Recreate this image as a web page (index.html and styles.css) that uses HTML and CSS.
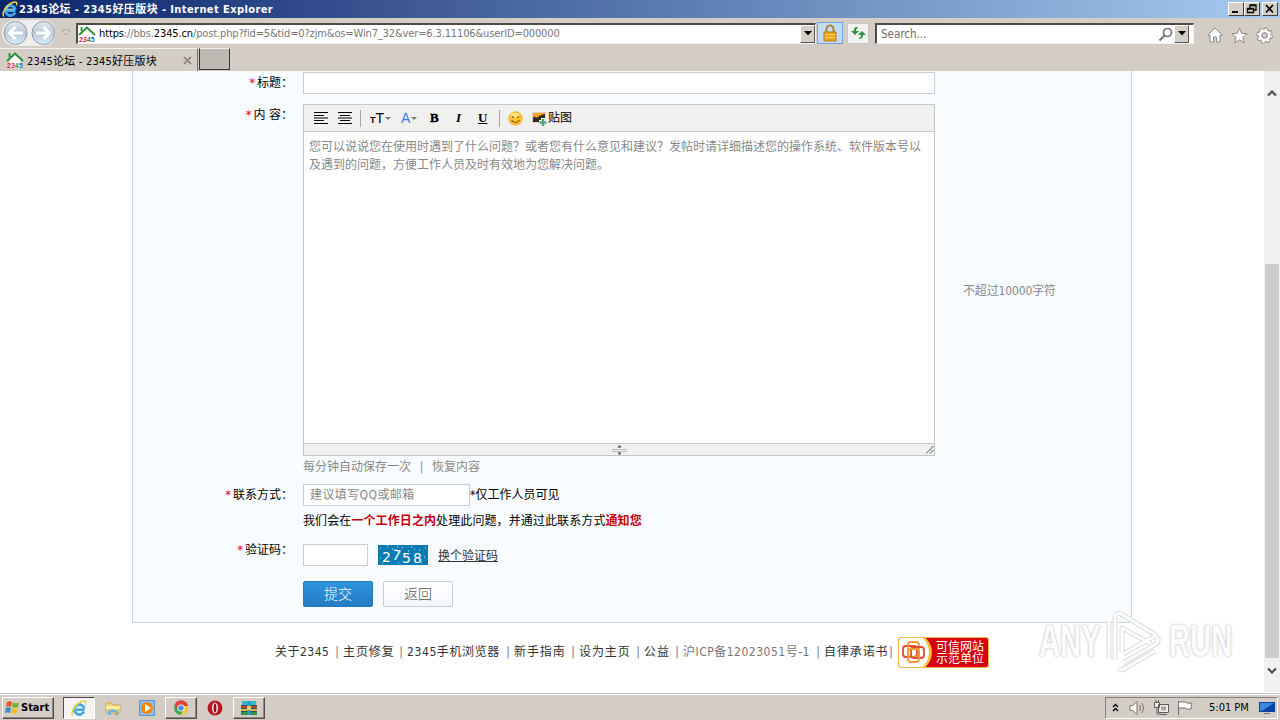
FILE: index.html
```
<!DOCTYPE html>
<html lang="zh-CN">
<head>
  <meta charset="UTF-8">
  <title>2345论坛 - 2345好压版块</title>
  <link rel="stylesheet" href="styles.css">
</head>
<body>

  <!-- shared symbols -->
  <svg class="defs" width="0" height="0">
    <symbol id="ie" viewBox="0 0 18 18">
      <path d="M14.500 10.500H6M14 12.500A5 5 0 1 1 14.300 9.500" fill="none" stroke="#45a9e8" stroke-width="2.800"/>
      <path d="M4.500 9.200H13" stroke="#a5e0fb" stroke-width="1"/>
      <path d="M3 16.500C0 14 5 5.500 11 2.800c4.500-2 5.500 0 4.300 2.700" fill="none" stroke="#f0cf4a" stroke-width="1.500"/>
    </symbol>
  </svg>

  <header class="titlebar">
    <svg class="icon18" viewBox="0 0 18 18"><use href="#ie"/></svg>
    <h1>2345论坛 - 2345好压版块 - Internet Explorer</h1>
    <div class="window-buttons">
      <button><svg width="13" height="10"><path d="M3 8h6" stroke="#000" stroke-width="2"/></svg></button>
      <button><svg width="13" height="10"><path d="M5 4V1h6v5H9M5 1.500h6M2.500 4.500h6v4h-6zM2 5h7" fill="none" stroke="#000" stroke-width="1.300"/></svg></button>
      <button class="close"><svg width="13" height="10"><path d="m3 1 7 7.500M10 1 3 8.500" stroke="#000" stroke-width="1.700"/></svg></button>
    </div>
  </header>

  <nav class="navbar">
    <svg class="history" width="56" height="30" viewBox="0 0 56 30">
      <defs>
        <linearGradient id="orb" x1="0" y1="0" x2="0" y2="1">
          <stop offset="0" stop-color="#e4e8ee"/><stop offset=".5" stop-color="#bcc8d6"/><stop offset="1" stop-color="#dceffc"/>
        </linearGradient>
      </defs>
      <rect x="2" y="2" width="54" height="26" rx="13" fill="#efeeee"/>
      <circle cx="15.500" cy="15" r="11.500" fill="url(#orb)" stroke="#8d9cae"/>
      <circle cx="43.500" cy="15" r="11.500" fill="url(#orb)" stroke="#8d9cae"/>
      <path d="M23 15H10M15.500 9l-6 6 6 6M36 15h13M43.500 9l6 6-6 6" fill="none" stroke="#fff" stroke-width="3"/>
    </svg>
    <svg class="history-arrow" width="10" height="8"><path d="M1 1h8L5 6z" fill="#ddd9d4" stroke="#aaa5a0"/></svg>
    <div class="address">
      <svg class="icon18" viewBox="0 0 18 18">
        <path d="M3.500 9v8h11V9L9 4z" fill="#fff"/>
        <path d="M1 10 9 2.500 17 10M3.500 6V2" fill="none" stroke="#258c35" stroke-width="1.800"/>
        <text class="logo-text" x="1" y="16.500"><tspan class="red">23</tspan><tspan class="green">4</tspan><tspan class="blue">5</tspan></text>
      </svg>
      <span class="url"><b>https</b>://bbs.<b>2345.cn</b>/post.php?fid=5&amp;tid=0?zjm&amp;os=Win7_32&amp;ver=6.3.11106&amp;userID=000000</span>
      <button class="drop"><svg width="8" height="5"><path d="M0 0h8L4 4.500z"/></svg></button>
    </div>
    <div class="lock">
      <svg width="16" height="18"><path d="M4.500 9V5a3.500 3.500 0 0 1 7 0v4" fill="none" stroke="#a8882a" stroke-width="2"/><path d="M2 8h12v9H2z" fill="#eda51d" stroke="#b57c13"/><path d="M3 10.500h10M3 13.500h10" stroke="#ffd264"/></svg>
    </div>
    <div class="refresh">
      <svg width="16" height="14" fill="#2f9140"><path d="M7 1C4 1 4 3 4 5H1l4 4 4-4H6C6 3.500 6 3 8 2z"/><path d="M9 13c3 0 4-2 4-4h3l-4-4-4 4h3c0 1.500 0 2-2 3z"/></svg>
    </div>
    <div class="search">
      <span>Search...</span>
      <svg width="16" height="16"><circle cx="9.500" cy="6.500" r="4" fill="none" stroke="#777" stroke-width="1.700"/><path d="m6.500 9.500-5 5" stroke="#777" stroke-width="2.200"/></svg>
      <button class="drop"><svg width="8" height="5"><path d="M0 0h8L4 4.500z"/></svg></button>
    </div>
    <div class="tools">
      <svg width="16" height="16" viewBox="0 0 16 16"><path d="M.8 8 8 1l7.200 7-1.200 1-1-.8V15H9.500v-5h-3v5H3V8.200L2 9z" fill="#fff" stroke="#8a8783"/></svg>
      <svg width="17" height="17" viewBox="0 0 17 17"><path d="m8.500 1 2.100 5.300 5.600.4-4.300 3.600 1.400 5.500-4.800-3-4.800 3 1.400-5.500L.8 6.700l5.600-.4z" fill="#fff" stroke="#8a8783"/></svg>
      <svg width="17" height="17" viewBox="0 0 17 17"><circle cx="8.500" cy="8.500" r="6.800" fill="none" stroke="#8a8783" stroke-width="3" stroke-dasharray="2.900 2.440"/><circle cx="8.500" cy="8.500" r="4.600" fill="none" stroke="#8a8783" stroke-width="4.600"/><circle cx="8.500" cy="8.500" r="6.500" fill="none" stroke="#fff" stroke-width="1.800" stroke-dasharray="2.100 3"/><circle cx="8.500" cy="8.500" r="4.600" fill="none" stroke="#fff" stroke-width="2.800"/></svg>
    </div>
  </nav>

  <div class="tabs">
    <div class="tab">
      <svg class="icon18" viewBox="0 0 18 18">
        <path d="M3.500 9v8h11V9L9 4z" fill="#fff"/>
        <path d="M1 10 9 2.500 17 10M3.500 6V2" fill="none" stroke="#258c35" stroke-width="1.800"/>
        <text class="logo-text" x="1" y="16.500"><tspan class="red">23</tspan><tspan class="green">4</tspan><tspan class="blue">5</tspan></text>
      </svg>
      <span>2345论坛 - 2345好压版块</span>
      <svg class="tab-close" width="9" height="9"><path d="m1 1 7 7M8 1 1 8" stroke="#858078" stroke-width="1.600"/></svg>
    </div>
    <div class="new-tab"></div>
  </div>

  <div class="viewport">
    <main>
      <form class="panel">
        <div class="row row-title">
          <label><i>*</i>标题：</label>
          <div class="input input-title"></div>
        </div>

        <div class="row row-content">
          <label><i>*</i>内 容：</label>
          <div class="editor">
            <div class="toolbar">
              <svg width="16" height="12"><path d="M1 .5h14M1 3.500h10M1 6h14M1 8.500h10M1 11.500h14" stroke="#000" stroke-width="1.200"/></svg>
              <svg class="t-center" width="16" height="12"><path d="M1 .5h14M3 3.500h10M1 6h14M3 8.500h10M1 11.500h14" stroke="#000" stroke-width="1.200"/></svg>
              <span class="sep sep-1"></span>
              <span class="t-size"><small>T</small>T<em></em></span>
              <span class="t-color">A<em></em></span>
              <span class="t-bold">B</span>
              <span class="t-italic">I</span>
              <span class="t-underline">U</span>
              <span class="sep sep-2"></span>
              <svg class="t-smile" width="15" height="15"><circle cx="7.500" cy="7.500" r="6.700" fill="#fbc52b" stroke="#eeb33a"/><ellipse cx="7" cy="4" rx="4" ry="2.300" fill="#ffe878"/><path d="M5 5v2M10 5v2M3.500 9c2 3.500 6 3.500 8 0" fill="none" stroke="#80501a" stroke-width="1.200"/></svg>
              <svg class="t-pic" width="16" height="15"><path d="M1.500 1.500h13v10h-13z" fill="#f8a91e" stroke="#d8d5c6"/><path d="M2 7c2-3 3 1 5-1s4-2 7-3v8H2z" fill="#382b18"/><path d="M12 7v8M8 11h8" stroke="#fff" stroke-width="4"/><path d="M12 8v7M8.500 11.500h7" stroke="#55a578" stroke-width="2.500"/></svg>
              <span class="t-text">贴图</span>
            </div>
            <div class="textarea">您可以说说您在使用时遇到了什么问题？或者您有什么意见和建议？发帖时请详细描述您的操作系统、软件版本号以及遇到的问题，方便工作人员及时有效地为您解决问题。</div>
            <div class="statusbar">
              <svg width="15" height="10"><path d="M0 4.500h15M0 6.500h15" stroke="#bbb"/><path d="M7.500 0 9.500 2.500h-4zM7.500 10l2-2.500h-4z" fill="#444"/></svg>
              <svg class="grip" width="9" height="9"><path d="M1 8.500 8.500 1M5 8.500 8.500 5" stroke="#555"/></svg>
            </div>
          </div>
          <span class="limit">不超过10000字符</span>
        </div>

        <div class="row row-save"><span>每分钟自动保存一次</span><span class="bar">|</span><span>恢复内容</span></div>

        <div class="row row-contact">
          <label><i>*</i>联系方式：</label>
          <div class="input input-contact">建议填写QQ或邮箱</div>
          <span class="visible-note">*仅工作人员可见</span>
        </div>

        <div class="row row-note">我们会在<strong>一个工作日之内</strong>处理此问题，并通过此联系方式<strong>通知您</strong></div>

        <div class="row row-captcha">
          <label><i>*</i>验证码：</label>
          <div class="input input-captcha"></div>
          <svg class="captcha" width="50" height="20">
            <rect width="50" height="20" fill="#087bb3"/>
            <path d="M2 3h1M9 1h1M14 4h1M19 2h1M33 2h1M41 5h1M47 3h1M2 13h1M6 8h1M30 6h1M46 12h1M43 18h1M20 18h1M36 4h1M24 3h1M4 18h1" stroke="#d5eef9"/>
            <g fill="#fff" font-family="DejaVu Sans" font-size="14"><text x="4" y="17">2</text><text x="14" y="15" transform="rotate(8 17 12)">7</text><text x="24" y="18">5</text><text x="35" y="18">8</text></g>
          </svg>
          <a class="change">换个验证码</a>
        </div>

        <div class="row row-buttons">
          <div class="btn btn-submit">提交</div>
          <div class="btn btn-back">返回</div>
        </div>
      </form>

      <footer class="footer">
        <a class="f1">关于2345</a><s>|</s><a class="f2">主页修复</a><s>|</s><a class="f3">2345手机浏览器</a><s>|</s><a class="f2 wide">新手指南</a><s>|</s><a class="f2 wide">设为主页</a><s>|</s><a class="f4">公益</a><s>|</s><a class="f5">沪ICP备12023051号-1</a><s>|</s><a class="f6">自律承诺书</a><s class="last">|</s>
        <div class="trust">
          <svg width="34" height="29" viewBox="0 0 34 29">
            <path d="M0 0h27q12 14 0 29H0z" fill="#f6bd35"/>
            <path d="M0 0h24q12 14 0 29H0z" fill="#fff"/>
            <g fill="none" stroke-width="1.800"><rect x="4" y="8" width="14" height="11" rx="3" stroke="#e34a2e"/><rect x="9" y="4" width="11" height="15" rx="3" stroke="#f09a35"/><rect x="12" y="9" width="13" height="11" rx="3" stroke="#e34a2e"/><rect x="9" y="11" width="11" height="13" rx="3" stroke="#f09a35"/></g>
          </svg>
          <span>可信网站<br>示范单位</span>
        </div>
      </footer>
    </main>

    <div class="scrollbar">
      <svg class="up" width="10" height="8"><path d="m1 6.500 4-4 4 4" fill="none" stroke="#505050" stroke-width="2.200"/></svg>
      <div class="thumb"></div>
      <svg class="down" width="10" height="8"><path d="m1 1.500 4 4 4-4" fill="none" stroke="#505050" stroke-width="2.200"/></svg>
    </div>
  </div>

  <div class="taskbar">
    <div class="start">
      <svg width="16" height="16" viewBox="0 0 16 16"><path d="M3 2c2-1 3-1 5 0L7 7C5 6 4 6 2 7z" fill="#e9572b"/><path d="M9 2.500c2 1 4 1 6 0L14 7c-2 1-4 1-6 0z" fill="#72b52e"/><path d="M2 8c2-1 3-1 5 0l-1 5c-2-1-3-1-5 0z" fill="#398ad0"/><path d="M8 8c2 1 4 1 6 0l-1 5c-2 1-4 1-6 0z" fill="#f5bd2b"/></svg>
      <span>Start</span>
    </div>
    <div class="task active"><svg width="18" height="18"><use href="#ie"/></svg></div>
    <div class="task flat"><svg width="16" height="16"><path d="M1 3h6l1 2h7v8H1z" fill="#f1d479" stroke="#d0ab4c"/><path d="M1 6h14v3H1z" fill="#fff0a6"/><path d="M3 15v-4q5-3 10 0v4h-3v-3H6v3z" fill="#69b5df"/></svg></div>
    <div class="task flat"><svg width="16" height="16"><rect x=".5" y=".5" width="15" height="15" fill="#8dc0e8" stroke="#5c96c8"/><circle cx="8" cy="8" r="6" fill="#f58415"/><path d="m6 4 6 4-6 4z" fill="#fff"/></svg></div>
    <div class="task raised"><svg width="16" height="16"><circle cx="8" cy="8" r="7" fill="#3aa757"/><path d="M1.500 5A7 7 0 0 1 15 6H8L4.500 9z" fill="#df4537"/><path d="M15 6a7 7 0 0 1-7.500 9L11 9V6z" fill="#f8c832"/><circle cx="8" cy="8" r="3.600" fill="#fff"/><circle cx="8" cy="8" r="2.700" fill="#4a88ea"/></svg></div>
    <div class="task flat"><svg width="16" height="16"><circle cx="8" cy="8" r="7.500" fill="#b91820"/><ellipse cx="8" cy="8" rx="3" ry="5.500" fill="#f5eaea"/><ellipse cx="8" cy="8" rx="1.400" ry="4.500" fill="#8e1017"/></svg></div>
    <div class="task raised"><svg width="18" height="16"><path d="M2 1h14v4H2z" fill="#36b5d8"/><path d="M1 5h16v3H1z" fill="#c5472e"/><path d="M1 8h16v3H1z" fill="#dbb947"/><path d="M1 11h16v4H1z" fill="#35924b"/><path d="M1 5.500h16M1 8.500h16M1 11.500h16" stroke="#315155"/><path d="M7.500 1h3v14h-3z" fill="#23a0c2"/><path d="M7 6h4v4H7z" fill="#f1d36c"/></svg></div>
    <div class="tray">
      <svg class="chev" width="7" height="10"><path d="m1 4 2.500-2.500L6 4M1 8l2.500-2.500L6 8" fill="none" stroke="#000" stroke-width="1.300"/></svg>
      <svg class="vol" width="17" height="16"><path d="M1 5.500h3l4-4v13l-4-4H1z" fill="#fff" stroke="#77736e"/><path d="M10.500 5q2 3 0 6M12.500 3q4 5 0 10" fill="none" stroke="#77736e"/></svg>
      <svg class="net" width="17" height="16"><path d="M5.500 4.500h10v8h-10zM8 14.500h6M1.500 2.500h5v5h-5zM4 8v6h4M3 0v3M5.500 0v3" fill="#eee" stroke="#5f5b57"/><path d="M8 6.500h5v4H8z" fill="#aaa6a1"/></svg>
      <svg class="flag" width="16" height="16"><path d="M1.500 1v14M2 2h7q1 2 6 1-1 4-1 6-4 1-6-1H2" fill="#fff" stroke="#77736e"/></svg>
      <span class="clock">5:01 PM</span>
      <svg class="desk" width="16" height="14"><path d="M0 1h16v10H0z" fill="#0c419e"/><path d="M1 2h14L3 10H1z" fill="#3d85df"/><path d="M5 12h6v1H5z" fill="#6d7680"/></svg>
    </div>
  </div>

  <!-- watermark over the desktop -->
  <div class="watermark">
    <span>ANY</span>
    <svg width="58" height="64" viewBox="0 0 58 64">
      <g fill="none" stroke-linejoin="round">
        <path d="M4 12v38M10 51V9q0-6 6-4l35 21M17 43V19l29 16M18 45l32-18q6 3 1 8L18 54M13 59l4 2 33-19" stroke="#dedede" stroke-width="5"/>
        <path d="M4 12v38M10 51V9q0-6 6-4l35 21M17 43V19l29 16M18 45l32-18q6 3 1 8L18 54M13 59l4 2 33-19" stroke="#fcfcfc" stroke-width="3"/>
      </g>
    </svg>
    <span>RUN</span>
  </div>

</body>
</html>
```
FILE: styles.css
```
* {
  box-sizing: border-box;
}

body {
  margin: 0;
  width: 1280px;
  height: 720px;
  overflow: hidden;
  display: flex;
  flex-direction: column;
  background: #fff;
  color: #000;
  font-family: "DejaVu Sans Condensed", "DejaVu Sans", "Noto Sans CJK SC", sans-serif;
  font-size: 12px;
  white-space: nowrap;
}

svg {
  display: block;
  flex: none;
}

button {
  padding: 0;
}

.defs {
  position: absolute;
}

.icon18 {
  width: 18px;
  height: 18px;
}

.logo-text {
  font-family: "Liberation Sans", sans-serif;
  font-size: 7px;
  font-weight: bold;
}

.red {
  fill: #d8261c;
}

.green {
  fill: #238a35;
}

.blue {
  fill: #2870c0;
}

/* window frame */
.titlebar {
  height: 18px;
  flex: none;
  display: flex;
  align-items: center;
  padding: 0 2px 0 1px;
  background: linear-gradient(90deg, #0a246a, #a6caf0);
}

.titlebar h1 {
  margin: 0;
  padding-top: 1px;
  flex: 1;
  line-height: 17px;
  font-size: 11px;
  font-weight: bold;
  letter-spacing: 0.41px;
  color: #fff;
}

.window-buttons {
  display: flex;
}

.window-buttons button {
  width: 16px;
  height: 14px;
  background: #d4d0c8;
  border: 1px solid;
  border-color: #fff #404040 #404040 #fff;
}

.window-buttons .close {
  margin-left: 2px;
}

.navbar {
  height: 30px;
  flex: none;
  display: flex;
  align-items: center;
  background: #d4cdc6;
  font-size: 11px;
}

.history-arrow {
  margin: 0 6px 0 5px;
}

.address,
.search {
  height: 21px;
  display: flex;
  align-items: center;
  background: #fff;
  border: 1px solid #f4f2ef;
  border-top: 2px solid #504a48;
  border-left: 2px solid #504a48;
}

.address {
  width: 740px;
  margin-left: -1px;
}

.url {
  flex: 1;
  margin-left: 3px;
  letter-spacing: -0.13px;
  color: #777;
}

.url b {
  font-weight: normal;
  color: #000;
}

.drop {
  width: 15px;
  height: 18px;
  display: flex;
  align-items: center;
  justify-content: center;
  background: #d4d0c8;
  border: 1px solid;
  border-color: #fff #555 #555 #fff;
}

.lock,
.refresh {
  display: flex;
  align-items: center;
  justify-content: center;
}

.lock {
  width: 26px;
  height: 22px;
  margin-left: 1px;
  background: #c3daf7;
  border: 1px solid #6fa4e0;
}

.refresh {
  width: 22px;
  height: 21px;
  margin-left: 4px;
  background: #f1f1f0;
  border: 1px solid #c9c6c2;
}

.search {
  width: 319px;
  margin-left: 6px;
  padding-right: 4px;
  color: #6c6c6c;
}

.search span {
  flex: 1;
  margin-left: 4px;
  font-size: 11.5px;
}

.tools {
  display: flex;
  gap: 8px;
  margin: 5px 0 0 13px;
}

.tabs {
  height: 23px;
  flex: none;
  display: flex;
  background: #d4cdc6;
}

.tab {
  width: 198px;
  display: flex;
  align-items: center;
  padding-left: 6px;
  border-top: 1px solid #f4f2ef;
  border-right: 1px solid #77716c;
  font-size: 11px;
}

.tab span {
  flex: 1;
  margin-left: 3px;
  letter-spacing: 0.22px;
}

.tab-close {
  margin-right: 5px;
}

.new-tab {
  width: 31px;
  height: 22px;
  margin-left: 1px;
  background: #bfb9b4;
  border: 1px solid #fff;
  border-color: #eee #333 #333 #333;
}

/* page */
.viewport {
  height: 622px;
  flex: none;
  display: flex;
  border-bottom: 1px solid #fff;
}

main {
  width: 1264px;
}

.panel {
  width: 1000px;
  height: 552px;
  margin: 0 0 0 132px;
  background: #f9fcff;
  border: 1px solid #c8d6e2;
  border-top: 0;
  display: flex;
  flex-direction: column;
}

.row {
  flex: none;
  display: flex;
}

.row label {
  width: 160px;
  margin-right: 10px;
  line-height: 22px;
  text-align: right;
}

.row label i {
  margin-right: 2px;
  color: #e60012;
  font-style: normal;
  font-size: 13px;
}

.input {
  height: 22px;
  background: #fff;
  border: 1px solid #c8cdd6;
}

.row-title {
  height: 33px;
  padding-top: 1px;
}

.input-title {
  width: 632px;
}

.row-content {
  height: 352px;
}

.editor {
  width: 632px;
  height: 352px;
  display: flex;
  flex-direction: column;
  background: #fff;
  border: 1px solid #c4c6ca;
}

.toolbar {
  height: 27px;
  flex: none;
  display: flex;
  align-items: center;
  padding-left: 9px;
  background: #f0f0ee;
  border-bottom: 1px solid #c8c8c8;
}

.t-center {
  margin-left: 8px;
}

.sep {
  width: 1px;
  height: 17px;
  background: #a5a5a5;
}

.sep-1 {
  margin-left: 7px;
}

.toolbar em {
  width: 0;
  height: 0;
  margin-left: 1px;
  border: 3px solid transparent;
  border-top: 3px solid #777;
  border-bottom: 0;
}

.t-size,
.t-color {
  display: flex;
  align-items: center;
  font-family: "Liberation Sans", sans-serif;
}

.t-size {
  width: 31px;
  margin-left: 9px;
  font-size: 14px;
  line-height: 14px;
}

.t-size small {
  font-size: 9px;
  padding-top: 3px;
  font-weight: bold;
}

.t-color {
  width: 29px;
  font-size: 14px;
  color: #3c78e6;
}

.t-bold,
.t-italic,
.t-underline {
  width: 24px;
  font-family: "Liberation Serif", serif;
  font-size: 13px;
  font-weight: bold;
}

.t-bold {
  -webkit-text-stroke: 0.4px #000;
}

.t-italic {
  padding-left: 2px;
  font-style: italic;
}

.t-underline {
  width: 21px;
  text-decoration: underline;
}

.t-smile {
  margin-left: 8px;
}

.t-pic {
  margin-left: 8px;
}

.t-text {
  margin-left: 1px;
  line-height: 20px;
}

.textarea {
  flex: 1;
  padding: 5px 10px 0 5px;
  color: #888;
  line-height: 18px;
  white-space: normal;
  word-break: break-all;
  font-family: "Noto Sans CJK SC", sans-serif;
}

.statusbar {
  height: 12px;
  flex: none;
  display: flex;
  align-items: center;
  justify-content: flex-end;
  background: #f0f0ee;
  border-top: 1px solid #c8c8c8;
}

.grip {
  margin-left: 298px;
}

.limit {
  align-self: center;
  margin: 18px 0 0 28px;
  letter-spacing: -0.15px;
  color: #888;
}

.row-save {
  height: 28px;
  padding-left: 170px;
  line-height: 22px;
  color: #888;
}

.row-save .bar {
  width: 21px;
  text-align: center;
}

.row-contact {
  height: 27px;
}

.input-contact {
  width: 167px;
  padding-left: 6px;
  line-height: 20px;
  letter-spacing: 0.4px;
  color: #888;
}

.visible-note {
  line-height: 23px;
}

.row-note {
  height: 33px;
  padding-left: 170px;
  line-height: 20px;
  letter-spacing: 0.1px;
}

.row-note strong {
  color: #c7000b;
}

.row-captcha {
  height: 37px;
}

.row-captcha label {
  margin-top: -5px;
}

.input-captcha {
  width: 65px;
}

.captcha {
  margin: 1px 10px 0;
}

.change {
  line-height: 24px;
  color: #333;
  text-decoration: underline;
}

.row-buttons {
  padding-left: 170px;
  gap: 10px;
}

.btn {
  width: 70px;
  height: 26px;
  line-height: 24px;
  text-align: center;
  font-size: 14px;
  font-weight: 300;
  border-radius: 2px;
}

.btn-submit {
  color: #fff;
  background: linear-gradient(#2e95dc, #257bc4);
  border: 1px solid #2778b9;
}

.btn-back {
  color: #555;
  background: linear-gradient(#fff, #f4f7fb);
  border: 1px solid #c8cdd6;
}

.footer {
  display: flex;
  align-items: center;
  height: 30px;
  margin: 14px 0 0 275px;
  font-size: 12px;
  line-height: 20px;
  color: #333;
}

.footer a {
  flex: none;
}

.footer s {
  width: 12px;
  text-align: center;
  text-decoration: none;
  color: #777;
}

.f1 {
  width: 56px;
  letter-spacing: 0.5px;
}

.f2 {
  width: 52px;
  letter-spacing: 0.9px;
}

.f2.wide {
  width: 53px;
}

.f3 {
  width: 95px;
  letter-spacing: 0.6px;
}

.f4 {
  width: 27px;
  letter-spacing: 0.9px;
}

.f5 {
  width: 129px;
  letter-spacing: 0.5px;
  color: #777;
}

.f6 {
  width: 65px;
  letter-spacing: 0.9px;
}

.footer .last {
  width: 4px;
}

.trust {
  width: 91px;
  height: 31px;
  margin-left: 5px;
  display: flex;
  overflow: hidden;
  background: #d6000f;
  border: 1px solid #efb84d;
  border-radius: 3px;
  color: #fff;
  line-height: 12px;
}

.trust span {
  margin: 3px 0 0 3px;
}

.scrollbar {
  width: 16px;
  display: flex;
  flex-direction: column;
  align-items: center;
  background: #f0f0f0;
}

.up {
  margin-top: 18px;
}

.thumb {
  width: 14px;
  height: 394px;
  margin: 167px 0 9px;
  background: #cdcdcd;
}

/* taskbar */
.taskbar {
  height: 27px;
  flex: none;
  display: flex;
  align-items: center;
  padding: 1px 2px 0;
  background: #d4cdc6;
  border-top: 1px solid #c9c3bd;
  box-shadow: inset 0 1px #fff;
}

.start,
.raised {
  background: #d4cdc6;
  border: 1px solid;
  border-color: #fff #504c49 #504c49 #fff;
  box-shadow: inset -1px -1px #8d8883;
}

.start {
  width: 52px;
  height: 22px;
  display: flex;
  align-items: center;
  padding-left: 1px;
  margin-right: 9px;
  font-size: 11px;
  font-weight: bold;
}

.start span {
  margin-left: 1px;
}

.task {
  width: 32px;
  height: 22px;
  display: flex;
  align-items: center;
  justify-content: center;
  margin-right: 2px;
}

.active {
  background: #f6f4f2;
  border: 1px solid;
  border-color: #504c49 #fff #fff #504c49;
}

.tray {
  width: 173px;
  height: 22px;
  margin-left: auto;
  display: flex;
  align-items: center;
  padding-left: 6px;
  border: 1px solid;
  border-color: #85807b #fff #fff #85807b;
  font-size: 11px;
}

.vol {
  margin-left: 10px;
}

.net {
  margin-left: 7px;
}

.flag {
  margin-left: 7px;
}

.clock {
  margin-left: 16px;
}

.desk {
  margin-left: auto;
  margin-right: 2px;
}

.watermark {
  position: absolute;
  left: 1039px;
  top: 609px;
  display: flex;
  align-items: center;
  font-family: "Liberation Sans", sans-serif;
  font-size: 45px;
  font-weight: bold;
  color: #fcfcfc;
  text-shadow: 0 0 3px #aaa;
}

.watermark span {
  width: 66px;
  transform: scaleX(0.65);
  transform-origin: left;
}

.watermark svg {
  margin-right: 6px;
}
```
